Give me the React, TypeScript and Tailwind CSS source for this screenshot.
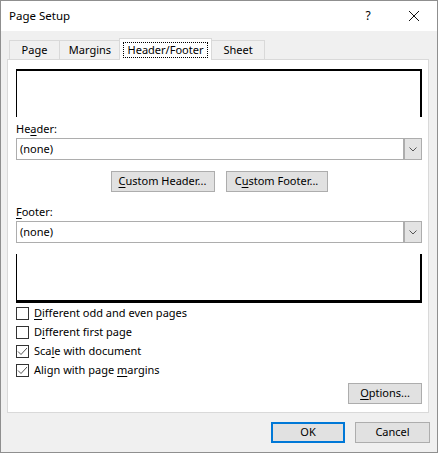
import { useState } from "react";

// underline one access-key letter inside a label
function Key({ text, k }: { text: string; k: number }) {
  return (
    <span className="whitespace-nowrap">
      {text.slice(0, k)}
      <span className="underline underline-offset-2">{text[k]}</span>
      {text.slice(k + 1)}
    </span>
  );
}

function Button({ children, w, primary }: any) {
  return (
    <div
      className={
        "h-[21px] flex items-center justify-center bg-[#e1e1e1] whitespace-nowrap " +
        (primary ? "border-2 border-[#0078d7] " : "border border-[#adadad] ") +
        w
      }
    >
      {children}
    </div>
  );
}

function Combo() {
  return (
    <div className="h-[22px] flex border border-[#adadad] bg-white">
      <div className="flex-1 flex items-center pl-[3px]">(none)</div>
      <div className="w-[18px] bg-[#e3e3e3] border-l-2 border-[#adadad] flex items-center justify-center">
        <svg width="8" height="5" viewBox="0 0 8 5">
          <path d="M0.5 0.5 L4 4 L7.5 0.5" fill="none" stroke="#555" strokeWidth="1" />
        </svg>
      </div>
    </div>
  );
}

function Check({ checked, children }: any) {
  return (
    <div className="h-[19px] flex items-center">
      <div className="w-[13px] h-[13px] border border-[#333] bg-white flex items-center justify-center">
        {checked && (
          <svg width="11" height="9" viewBox="0 0 11 9">
            <path d="M1 4.5 L4 7.5 L10 1" fill="none" stroke="#555" strokeWidth="1" />
          </svg>
        )}
      </div>
      <div className="ml-[5px]">{children}</div>
    </div>
  );
}

export default function App() {
  const [tab] = useState("Header/Footer");

  return (
    <div
      className="w-[438px] h-[453px] border border-[#8f8f8f] bg-[#f0f0f0] flex flex-col text-[11px] text-black"
      style={{ fontFamily: '"Segoe UI", "Noto Sans", sans-serif' }}
    >
      {/* Title bar */}
      <div className="h-[30px] bg-white flex items-center pl-[8px]">
        <div className="flex-1 text-[11.5px]">Page Setup</div>
        <div className="w-[46px] text-center text-[12px]">?</div>
        <div className="w-[46px] flex items-center justify-center">
          <svg width="10" height="10" viewBox="0 0 10 10">
            <path d="M0 0 L10 10 M10 0 L0 10" stroke="#111" strokeWidth="1" />
          </svg>
        </div>
      </div>

      <div className="pl-[6px] pr-[8px] pt-[7px] flex-1 flex flex-col">
        {/* Tabs */}
        <div className="flex items-end h-[22px] pl-[2px] relative z-10">
          <div className="w-[51px] h-[20px] border border-b-0 border-[#d9d9d9] flex items-center justify-center">Page</div>
          <div className="w-[61px] h-[20px] border border-l-0 border-b-0 border-[#d9d9d9] flex items-center justify-center">Margins</div>
          <div className="w-[93px] h-[22px] -ml-[2px] bg-white border border-b-0 border-[#d9d9d9] flex items-center justify-center pt-[1px]">
            <div className="border border-dotted border-black px-[4px] leading-[14px]">{tab}</div>
          </div>
          <div className="w-[53px] h-[20px] border border-l-0 border-b-0 border-[#d9d9d9] flex items-center justify-center">Sheet</div>
        </div>

        {/* Panel */}
        <div className="-mt-[1px] h-[354px] bg-white border border-[#d9d9d9] pl-[8px] pr-[6px] pt-[9px] flex flex-col">
          <div className="h-[48px] border-t-2 border-l border-r-2 border-black" />
          <div className="mt-[4px] h-[16px] leading-[16px]">
            <Key text="Header:" k={2} />
          </div>
          <div className="mt-[1px]">
            <Combo />
          </div>
          <div className="mt-[11px] flex justify-center gap-[11px]">
            <Button w="w-[104px]">
              <Key text="Custom Header..." k={0} />
            </Button>
            <Button w="w-[102px]">
              <Key text="Custom Footer..." k={1} />
            </Button>
          </div>
          <div className="mt-[12px] h-[16px] leading-[16px]">
            <Key text="Footer:" k={0} />
          </div>
          <div className="mt-[1px]">
            <Combo />
          </div>
          <div className="mt-[11px] h-[49px] border-l border-r-2 border-b-[3px] border-black" />
          <div className="mt-[1px] flex flex-col">
            <Check>
              <Key text="Different odd and even pages" k={0} />
            </Check>
            <Check>
              <Key text="Different first page" k={1} />
            </Check>
            <Check checked>
              <Key text="Scale with document" k={3} />
            </Check>
            <Check checked>
              <Key text="Align with page margins" k={16} />
            </Check>
          </div>
          <div className="mt-[3px] flex justify-end">
            <Button w="w-[74px]">
              <Key text="Options..." k={0} />
            </Button>
          </div>
        </div>

        {/* Footer buttons */}
        <div className="mt-[9px] flex justify-end gap-[10px] -mr-[1px]">
          <Button w="w-[74px]" primary>
            OK
          </Button>
          <Button w="w-[75px]">Cancel</Button>
        </div>
      </div>
    </div>
  );
}
